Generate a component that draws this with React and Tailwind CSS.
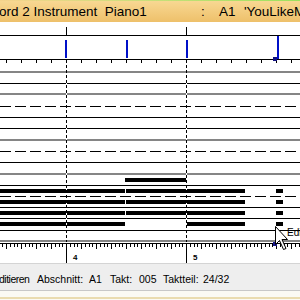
import React from "react";

// staff lines of the roll: y position (page) and kind (g = gray, b = black, d = dashed)
const LINES = [
  [72, "g"], [83, "b"], [94, "g"], [106, "d"], [117, "b"], [128, "b"], [140, "g"], [151, "d"],
  [162, "b"], [174, "g"], [185, "b"], [196, "d"], [207, "b"], [218, "b"], [230, "b"], [241, "g"],
];

const ROLL_TOP = 60;

// note bars: page y, x from, x to
const NOTES = [
  [178, 125, 186],
  [189, 0, 125], [189, 126, 245], [189, 276, 283],
  [200, 0, 125], [200, 126, 245], [200, 276, 283],
  [211, 0, 125], [211, 126, 245], [211, 276, 283],
  [222, 0, 125], [222, 186, 245], [222, 276, 283],
];

function StaffRow({ height, kind }) {
  return (
    <div className="flex flex-col" style={{ height }}>
      <div className="flex-1" />
      {kind === "g" && <div className="h-[2px] bg-[#858585]" />}
      {kind === "b" && <div className="h-px bg-black" />}
      {kind === "d" && (
        <div className="h-px bg-[repeating-linear-gradient(90deg,#000_0_11px,transparent_11px_15px)]" />
      )}
    </div>
  );
}

function BarLine({ left }) {
  return (
    <div
      className="absolute top-0 bottom-0 w-px z-10 bg-[repeating-linear-gradient(180deg,#000_0_3px,#fff_3px_5px)]"
      style={{ left }}
    />
  );
}

export default function App() {
  let prev = ROLL_TOP - 1;
  const rows = LINES.map(([y, kind]) => {
    const h = y - prev;
    prev = y;
    return { h, kind, y };
  });

  const topTicks = [];
  for (let x = 6; x < 300; x += 15) topTicks.push(x);

  const bottomTicks = [];
  for (let i = -18; i < 64; i++) bottomTicks.push({ x: 66 + i * 3.75, big: i % 4 === 0 });

  return (
    <div className="relative w-[300px] h-[300px] overflow-hidden bg-white font-['Liberation_Sans',Arial,sans-serif] text-black select-none">
      {/* title bar */}
      <div className="h-[22px] flex flex-col bg-linear-to-b from-[#f8d994] to-[#eec06a]">
        <div className="h-px bg-linear-to-r from-[#f5d38c] via-[#c8df7a] to-[#9be25e]" />
        <div className="flex-1 flex items-center pt-px text-[13.5px] leading-none whitespace-nowrap">
          <span className="w-[202px] shrink-0 ml-[-1px]">ord 2 Instrument&nbsp; Piano1</span>
          <span className="w-[18px] shrink-0">:</span>
          <span className="w-[25px] shrink-0">A1</span>
          <span>'YouLikeMe'</span>
        </div>
      </div>

      {/* top ruler */}
      <div className="relative h-[14px] border-b border-black">
        <div className="absolute left-[66px] top-[5px] h-[8px] w-px bg-black" />
        <div className="absolute left-[186px] top-[5px] h-[8px] w-px bg-black" />
      </div>

      {/* marker strip */}
      <div className="relative h-[23px]">
        <div className="absolute left-[65px] top-[4px] h-[18px] w-[2px] bg-[#0010c8]" />
        <div className="absolute left-[126px] top-[4px] h-[18px] w-[2px] bg-[#0010c8]" />
        <div className="absolute left-[186px] top-[4px] h-[18px] w-[2px] bg-[#0010c8]" />
        <div className="absolute left-[277px] top-0 h-[23px] w-[2px] bg-[#0010c8]" />
        <div className="absolute left-[273px] top-[21px] h-[4px] w-[4px] z-20 bg-[#101080]" />
      </div>
      <div className="h-px bg-black" />

      {/* piano roll */}
      <div className="relative">
        <svg className="absolute left-0 top-0 z-10" width="300" height="3">
          {topTicks.map((x) => (
            <line key={x} x1={x + 0.5} y1="0" x2={x + 0.5} y2="3" stroke="#000" />
          ))}
        </svg>
        {rows.map((r) => (
          <StaffRow key={r.y} height={r.h} kind={r.kind} />
        ))}
        {NOTES.map(([y, x1, x2], i) => (
          <div
            key={i}
            className="absolute h-[4px] bg-black"
            style={{ top: y - ROLL_TOP, left: x1, width: x2 - x1 }}
          />
        ))}
        <BarLine left={66} />
        <BarLine left={186} />
      </div>

      {/* bottom ruler */}
      <div className="relative h-[21px]">
        <div className="absolute left-0 right-0 top-px h-px bg-black" />
        <svg className="absolute left-0 top-0" width="300" height="21">
          {bottomTicks.map((t) => (
            <line
              key={t.x}
              x1={Math.round(t.x) + 0.5}
              y1="2"
              x2={Math.round(t.x) + 0.5}
              y2={t.big ? 7 : 5}
              stroke="#000"
            />
          ))}
          <line x1="66.5" y1="1" x2="66.5" y2="21" stroke="#000" />
          <line x1="186.5" y1="1" x2="186.5" y2="21" stroke="#000" />
        </svg>
        <div className="absolute left-[273px] top-0 h-[4px] w-[4px] bg-[#1a1a8c]" />
        <span className="absolute left-[73px] top-[12px] text-[8px] leading-none font-bold">4</span>
        <span className="absolute left-[193px] top-[12px] text-[8px] leading-none font-bold">5</span>
      </div>

      {/* status bar */}
      <div className="h-[27px] bg-[#eeeeee] border-t border-[#d4d4d4] flex items-start pt-[9px] text-[10.5px] leading-[13px] whitespace-nowrap">
        <span className="w-[38px] shrink-0 ml-[-1px] tracking-[-0.5px]">ditieren</span>
        <span className="w-[52px] shrink-0">Abschnitt:</span>
        <span className="w-[21px] shrink-0">A1</span>
        <span className="w-[29px] shrink-0">Takt:</span>
        <span className="w-[24px] shrink-0">005</span>
        <span className="w-[40px] shrink-0">Taktteil:</span>
        <span>24/32</span>
      </div>

      {/* bottom strip */}
      <div className="h-[10px] flex flex-col bg-[#fbfaf4] border-t border-[#c8c8c8]">
        <div className="h-[6px]" />
        <div className="h-[2px] bg-[#eadcb0]" />
      </div>

      {/* mouse cursor with edit label */}
      <svg className="absolute left-[275px] top-[226px] z-30" width="16" height="26" viewBox="0 0 16 26">
        <path
          d="M0.5 0.5 L0.5 18.5 L4.5 14.5 L8.5 23.5 L11 22.5 L7 13.5 L12.5 13.5 Z"
          fill="#fff"
          stroke="#000"
        />
      </svg>
      <span className="absolute left-[287px] top-[228px] z-30 text-[10px] leading-none">Edit</span>
    </div>
  );
}
